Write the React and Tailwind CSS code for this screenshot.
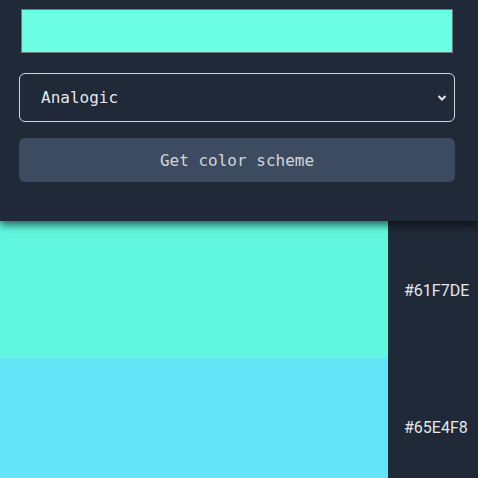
// Color scheme picker: seed swatch, mode select, and the resulting palette rows.
const colors = ['#61F7DE', '#65E4F8']

export default function App() {
  return (
    <div className="min-h-screen bg-[#1f2937] font-['DejaVu_Sans_Mono',monospace]">
      <header className="relative z-10 bg-[#1f2937] pl-[19px] pr-[23px] pt-[9px] pb-[39px] shadow-[0_4px_8px_rgba(0,0,0,0.6)]">
        <div className="mx-[2px] h-[44px] border border-[#767676] bg-[#6bfee4]" />
        <div className="relative mt-[20px] flex h-[49px] items-center rounded-[6px] border border-[#d1d5db] pl-[21px] pt-[1px] text-[16px] text-[#e5e7eb]">
          Analogic
          <svg
            className="absolute right-[7px] top-[20px]"
            width="10"
            height="8"
            viewBox="0 0 10 8"
            fill="none"
            stroke="#e5e7eb"
            strokeWidth="2"
          >
            <path d="M1.5 2l3.5 3.5L8.5 2" />
          </svg>
        </div>
        <button className="mt-[16px] flex h-[44px] w-full items-center justify-center rounded-[6px] bg-[#3d4b60] pt-[2px] text-[16px] text-[#d1d5db]">
          Get color scheme
        </button>
      </header>
      <main>
        {colors.map((c) => (
          <div key={c} className="flex h-[137px]">
            <div className="w-[388px]" style={{ backgroundColor: c }} />
            <div className="flex flex-1 items-center pl-[16px] pt-[2px] font-['Roboto',sans-serif] text-[16px] text-[#e5e7eb]">
              {c}
            </div>
          </div>
        ))}
      </main>
    </div>
  )
}
